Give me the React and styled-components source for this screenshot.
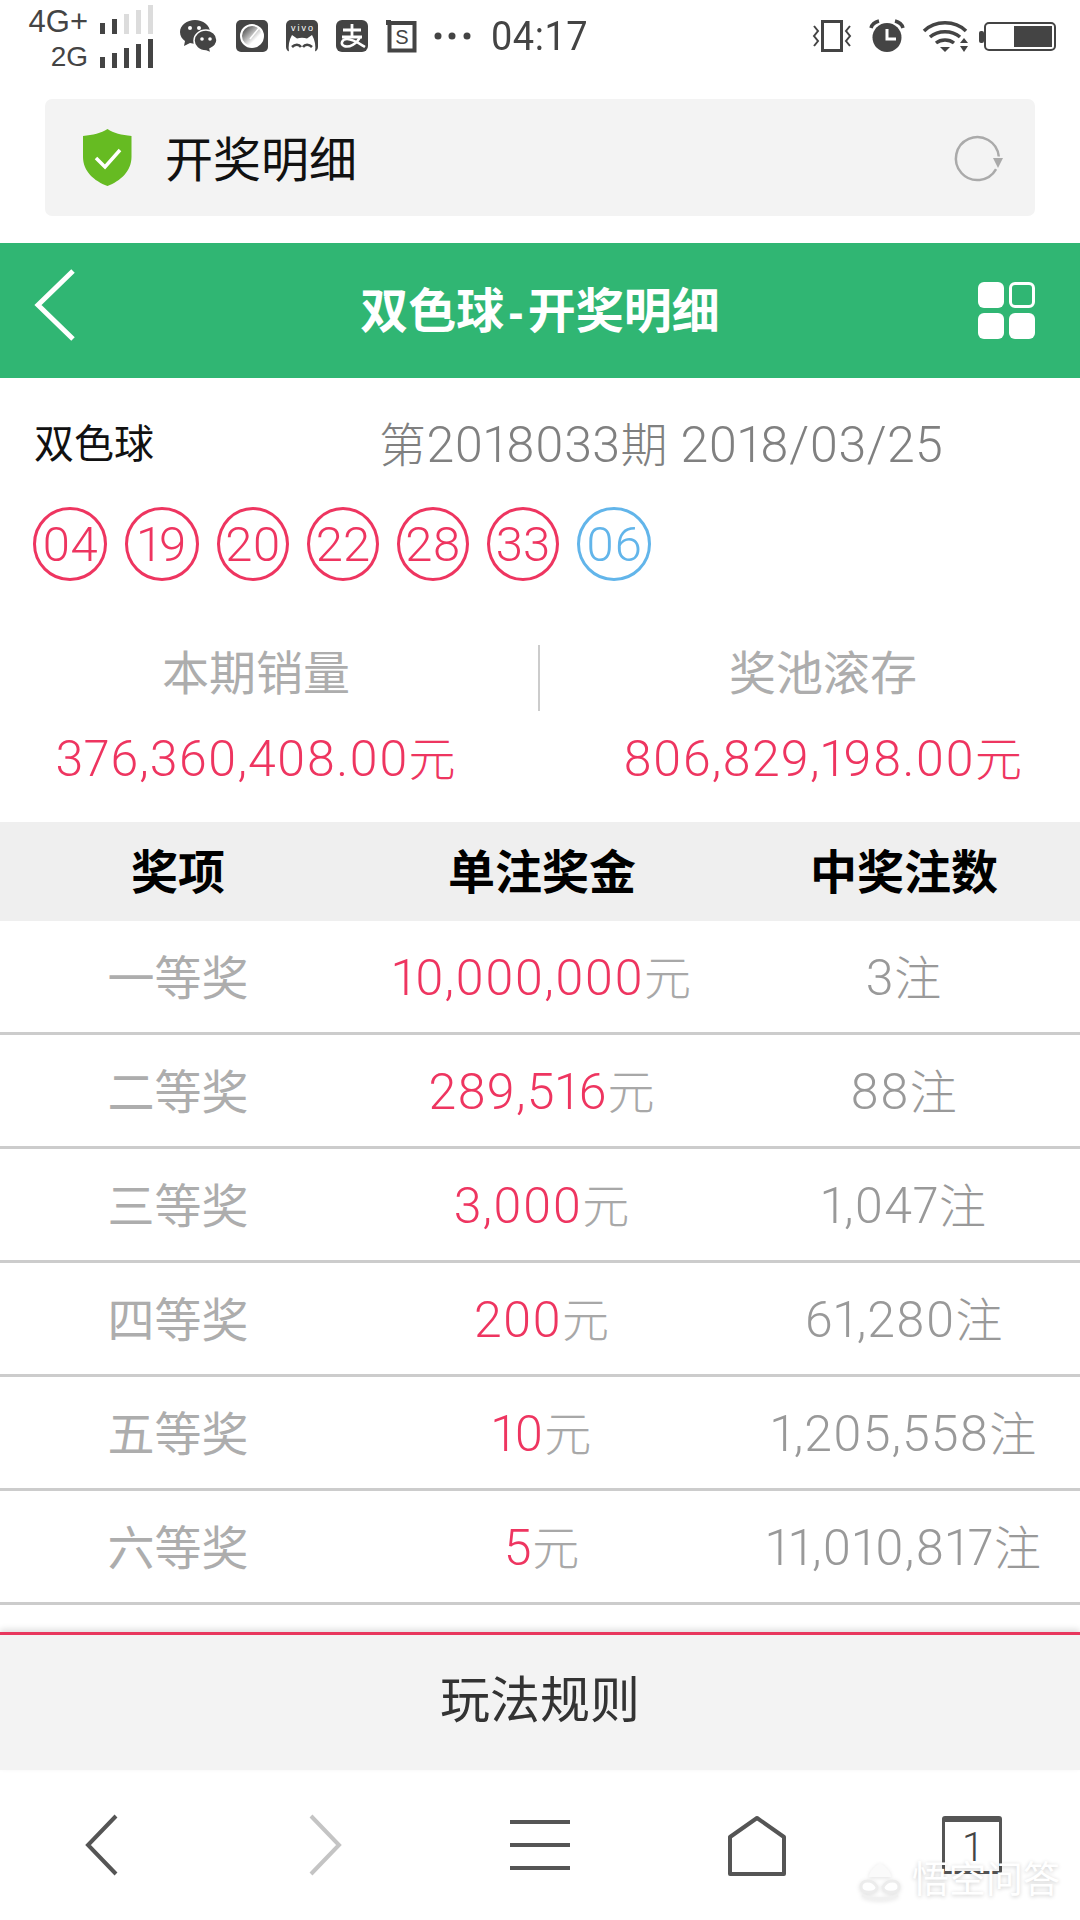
import React from 'react';
import styled, { createGlobalStyle } from 'styled-components';

const FONT = 'Roboto, "Noto Sans CJK SC", sans-serif';
const RED = '#ee3560';
const BLUE = '#62b5ea';
const GREY = '#a8a8a8';
const DARK = '#444444';

const balls = [
  { n: '04', wide: true },
  { n: '19', wide: true },
  { n: '20' },
  { n: '22' },
  { n: '28' },
  { n: '33' },
  { n: '06', blue: true, wide: true },
];

const prizes = [
  { name: '一等奖', money: '10,000,000', count: '3' },
  { name: '二等奖', money: '289,516', count: '88' },
  { name: '三等奖', money: '3,000', count: '1,047' },
  { name: '四等奖', money: '200', count: '61,280' },
  { name: '五等奖', money: '10', count: '1,205,558' },
  { name: '六等奖', money: '5', count: '11,010,817' },
];

const Signal = ({ levels }) => (
  <svg width="52" height="29" viewBox="0 0 52 29">
    {[11, 15, 20, 24, 29].map((h, i) => (
      <rect key={h} x={i * 12} y={29 - h} width="5" height={h} fill={i < levels ? DARK : '#dcdcdc'} />
    ))}
  </svg>
);

const App = () => (
  <Page>
    <GlobalStyle />
    <StatusBar>
      <SignalBlock>
        <SignalRow><SignalText $size={31} $line={25}>4G+</SignalText><Signal levels={2} /></SignalRow>
        <SignalRow><SignalText $size={28} $line={22}>2G</SignalText><Signal levels={5} /></SignalRow>
      </SignalBlock>
      <NotifyIcons>
        <svg width="38" height="33" viewBox="0 0 38 33">
          <path d="M15 0C7 0 0 5 0 12c0 4 2 7 5 9l-1 5 6-3c2 .5 4 .7 6 .6C24 23 30 18 30 12 30 5 23 0 15 0z" fill={DARK} />
          <path d="M26 10c-7 0-12 5-12 10.500S19 31 26 31l5 2-1-4c4-2 7-5 7-9 0-5.500-5-10-11-10z" fill={DARK} stroke="#fff" strokeWidth="1.500" />
          <circle cx="10" cy="8" r="2" fill="#fff" /><circle cx="19" cy="8" r="2" fill="#fff" />
          <circle cx="22" cy="19" r="1.800" fill="#fff" /><circle cx="30" cy="19" r="1.800" fill="#fff" />
        </svg>
        <svg width="32" height="32" viewBox="0 0 32 32">
          <defs>
            <linearGradient id="dial" x1="0.100" y1="0.100" x2="0.800" y2="0.800">
              <stop offset="0" stopColor="#444" /><stop offset="0.800" stopColor="#fff" />
            </linearGradient>
          </defs>
          <rect width="32" height="32" rx="5" fill={DARK} />
          <circle cx="16" cy="16" r="11" fill="url(#dial)" stroke="#fff" strokeWidth="2" />
          <path d="M14 19L23 8" stroke="#fff" strokeWidth="1.500" />
        </svg>
        <svg width="32" height="32" viewBox="0 0 32 32">
          <rect width="32" height="32" rx="5" fill={DARK} />
          <text x="16" y="11" fontSize="9" textLength="22" fill="#fff" textAnchor="middle" fontFamily="Liberation Sans, sans-serif">vivo</text>
          <path d="M6 15l5 3.500c3-1 7-1 10 0L26 15c3 5 4 11 3 17H3c-1-6 0-12 3-17z" fill="#fff" />
          <path d="M6 27c3-3 7-3 9 0M17 27c2-3 6-3 9 0" stroke={DARK} strokeWidth="2.500" fill="none" />
        </svg>
        <svg width="32" height="32" viewBox="0 0 32 32">
          <rect width="32" height="32" rx="6" fill={DARK} />
          <path d="M16 4v12M7 10h18M6 17h20" stroke="#fff" strokeWidth="2.800" fill="none" />
          <path d="M24 17c-3 7-11 11-16 9-4-2-2-7 3-7 6 0 13 5 18 8" stroke="#fff" strokeWidth="2.500" fill="none" />
        </svg>
        <svg width="30" height="32" viewBox="0 0 30 32">
          <path d="M3 3h25.500v27.500H3.500V3" stroke={DARK} strokeWidth="4" fill="none" />
          <rect y="0" width="5" height="5" fill={DARK} />
          <text x="16" y="24" fontSize="20" fill={DARK} textAnchor="middle" fontFamily="Liberation Sans, sans-serif">S</text>
        </svg>
        <svg width="37" height="8" viewBox="0 0 37 8">
          <circle cx="4" cy="4" r="3.500" fill={DARK} /><circle cx="18" cy="4" r="3.500" fill={DARK} /><circle cx="33" cy="4" r="3.500" fill={DARK} />
        </svg>
      </NotifyIcons>
      <Clock>04:17</Clock>
      <SystemIcons>
        <svg width="38" height="32" viewBox="0 0 38 32">
          <rect x="9.500" y="1.500" width="19" height="29" stroke={DARK} strokeWidth="3" fill="none" />
          <path d="M1 6l4 5-4 5 4 5-4 5" stroke={DARK} strokeWidth="2" fill="none" />
          <path d="M37 6l-4 5 4 5-4 5 4 5" stroke={DARK} strokeWidth="2" fill="none" />
        </svg>
        <svg width="34" height="32" viewBox="0 0 34 32">
          <circle cx="17" cy="17.500" r="14.500" fill={DARK} />
          <path d="M1 8c1-4 4-6 8-7M33 8c-1-4-4-6-8-7" stroke={DARK} strokeWidth="3.500" fill="none" />
          <path d="M17 9v10h9" stroke="#fff" strokeWidth="3" fill="none" />
        </svg>
        <svg width="45" height="32" viewBox="0 0 45 32">
          <path d="M1 11C12 0 32 0 43 11" stroke={DARK} strokeWidth="3.500" fill="none" />
          <path d="M7 17c8-7 22-7 30 0" stroke={DARK} strokeWidth="3.500" fill="none" />
          <path d="M13 23c5-4 13-4 18 0" stroke={DARK} strokeWidth="3.500" fill="none" />
          <path d="M17 27h10l-5 5z" fill={DARK} />
          <path d="M41 18l4 5h-8zM37 26h8l-4 6z" fill={DARK} />
        </svg>
        <svg width="77" height="29" viewBox="0 0 77 29">
          <rect x="0" y="9" width="5" height="12" rx="2" fill={DARK} />
          <rect x="6" y="1" width="70" height="27" rx="4" stroke={DARK} strokeWidth="2" fill="#fff" />
          <rect x="35" y="4" width="38" height="21" fill={DARK} />
        </svg>
      </SystemIcons>
    </StatusBar>

    <AddressBar>
      <svg width="49" height="57" viewBox="0 0 49 57">
        <path d="M24.500 0c6 4 14 6 24 7v21c0 14-11 24-24 29C11 52 0 42 0 28V7c10-1 18-3 24.500-7z" fill="#66bb22" />
        <path d="M13 29l9 9 15-17" stroke="#fff" strokeWidth="3.500" fill="none" />
      </svg>
      <AddressText>开奖明细</AddressText>
      <Reload>
        <svg width="50" height="48" viewBox="0 0 50 48">
          <path d="M44 31A21.500 21.500 0 1 1 44 18" stroke="#aaa" strokeWidth="2.500" fill="none" transform="rotate(12 23 24)" />
          <path d="M39 24h10l-5 10z" fill="#aaa" />
        </svg>
      </Reload>
    </AddressBar>

    <Header>
      <BackArrow width="44" height="74" viewBox="0 0 44 74">
        <path d="M40 3L5 37l35 34" stroke="#fff" strokeWidth="5" fill="none" />
      </BackArrow>
      <HeaderTitle>双色球<Dash>-</Dash>开奖明细</HeaderTitle>
      <GridIcon>
        <GridCell />
        <GridCell $outline />
        <GridCell />
        <GridCell />
      </GridIcon>
    </Header>

    <InfoRow>
      <LotteryName>双色球</LotteryName>
      <Issue>
        <Cjk>第</Cjk>2018033<Cjk>期</Cjk> 2018/03/25
      </Issue>
    </InfoRow>

    <BallRow>
      {balls.map((b) => (
        <Ball key={b.n} $blue={b.blue} $wide={b.wide}>{b.n}</Ball>
      ))}
    </BallRow>

    <Stats>
      <StatLabel>本期销量</StatLabel>
      <StatDivider />
      <StatLabel>奖池滚存</StatLabel>
      <StatValue>376,360,408.00<Cjk>元</Cjk></StatValue>
      <span />
      <StatValue>806,829,198.00<Cjk>元</Cjk></StatValue>
    </Stats>

    <TableHead>
      <HeadCell>奖项</HeadCell>
      <HeadCell>单注奖金</HeadCell>
      <HeadCell>中奖注数</HeadCell>
    </TableHead>
    {prizes.map((p) => (
      <PrizeRow key={p.name}>
        <PrizeName>{p.name}</PrizeName>
        <PrizeMoney>{p.money}<GreyCjk>元</GreyCjk></PrizeMoney>
        <PrizeCount>{p.count}<Cjk>注</Cjk></PrizeCount>
      </PrizeRow>
    ))}

    <RulesPanel>玩法规则</RulesPanel>

    <BottomNav>
      <svg width="33" height="60" viewBox="0 0 33 60">
        <path d="M31 1L3 30l28 29" stroke="#555" strokeWidth="4" fill="none" />
      </svg>
      <svg width="33" height="60" viewBox="0 0 33 60">
        <path d="M2 1l28 29L2 59" stroke="#c4c4c4" strokeWidth="4" fill="none" />
      </svg>
      <MenuIcon><MenuBar /><MenuBar /><MenuBar /></MenuIcon>
      <svg width="58" height="61" viewBox="0 0 58 61">
        <path d="M29 3L56 22v37H2V22z" stroke="#555" strokeWidth="4" fill="none" strokeLinejoin="round" />
      </svg>
      <TabsIcon>1</TabsIcon>
    </BottomNav>

    <Watermark>
      <WatermarkLogo width="44" height="38" viewBox="0 0 44 38">
        <path d="M22 1c-7 5-11 9-11 14h22c0-5-4-9-11-14z" fill="#fafafa" />
        <path d="M3 25c0-8 12-8 16 0 0 7-16 7-16 0zM25 25c4-8 16-8 16 0 0 7-16 7-16 0z" fill="#fff" stroke="#ececec" strokeWidth="3" />
        <path d="M4 33c10 5 26 5 36 0" stroke="#f0f0f0" strokeWidth="3" fill="none" />
      </WatermarkLogo>
      <WatermarkText>悟空问答</WatermarkText>
    </Watermark>
  </Page>
);

const GlobalStyle = createGlobalStyle`
  html, body {
    margin: 0;
    padding: 0;
    background: #fff;
  }
  * {
    box-sizing: border-box;
  }
  svg {
    display: block;
    flex: none;
    overflow: visible;
  }
`;

const Page = styled.div`
  position: relative;
  width: 1080px;
  height: 1920px;
  overflow: hidden;
  background: #fff;
  font-family: ${FONT};
  font-weight: 400;
  font-variant-numeric: proportional-nums;
`;

const StatusBar = styled.div`
  display: flex;
  align-items: center;
  height: 72px;
  padding: 0 24px 0 30px;
  color: ${DARK};
`;

const SignalBlock = styled.div`
  display: flex;
  flex-direction: column;
  align-items: flex-end;
  gap: 5px;
  width: 122px;
  margin-top: 1px;
`;

const SignalRow = styled.div`
  display: flex;
  align-items: flex-end;
  gap: 12px;
  height: 29px;
`;

const SignalText = styled.span`
  font-family: "Liberation Sans", sans-serif;
  font-size: ${(p) => p.$size}px;
  line-height: ${(p) => p.$line}px;
`;

const NotifyIcons = styled.div`
  display: flex;
  align-items: center;
  gap: 18px;
  margin-left: 28px;
`;

const Clock = styled.span`
  margin-left: 20px;
  font-family: Roboto, sans-serif;
  font-size: 38px;
  font-variant-numeric: tabular-nums;
  letter-spacing: 0.5px;
  transform: scaleY(1.05);
`;

const SystemIcons = styled.div`
  display: flex;
  align-items: center;
  gap: 19px;
  margin-left: auto;

  svg:last-child {
    margin-left: -8px;
  }
`;

const AddressBar = styled.div`
  display: flex;
  align-items: center;
  height: 117px;
  margin: 27px 45px;
  padding: 0 30px 0 38px;
  background: #f3f3f3;
  border-radius: 7px;
`;

const AddressText = styled.span`
  margin: -4px 0 0 33px;
  font-size: 48px;
  color: #111;
`;

const Reload = styled.div`
  margin-left: auto;
  margin-right: 1px;
`;

const Header = styled.div`
  display: flex;
  align-items: center;
  justify-content: space-between;
  height: 135px;
  padding: 0 45px 0 33px;
  background: #30b673;
`;

const BackArrow = styled.svg`
  margin-bottom: 12px;
`;

const HeaderTitle = styled.h1`
  margin: -7px 0 0 25px;
  font-size: 48px;
  font-weight: 700;
  color: #fff;
`;

const Dash = styled.span`
  padding: 0 4px;
  font-family: "Liberation Sans", sans-serif;
  font-size: 46px;
`;

const GridIcon = styled.div`
  display: grid;
  grid-template-columns: 26px 26px;
  grid-auto-rows: 26px;
  gap: 5px;
`;

const GridCell = styled.div`
  border-radius: 6px;
  background: ${(p) => (p.$outline ? 'transparent' : '#fff')};
  border: ${(p) => (p.$outline ? '3px solid #fff' : 'none')};
`;

const InfoRow = styled.div`
  display: flex;
  align-items: center;
  height: 129px;
  padding: 0 34px 3px;
`;

const LotteryName = styled.span`
  font-size: 40px;
  color: #111;
`;

const Issue = styled.span`
  margin-left: 225px;
  font-size: 50px;
  font-weight: 300;
  letter-spacing: 0.4px;
  color: #808080;
  white-space: pre;
`;

const Cjk = styled.span`
  font-size: 47px;
`;

const GreyCjk = styled(Cjk)`
  color: ${GREY};
`;

const BallRow = styled.div`
  display: flex;
  gap: 18px;
  padding-left: 33px;
`;

const Ball = styled.div`
  display: flex;
  align-items: center;
  justify-content: center;
  width: ${(p) => (p.$wide ? 74 : 72)}px;
  height: 74px;
  border: 3px solid ${(p) => (p.$blue ? BLUE : RED)};
  border-radius: 50%;
  font-size: 49px;
  font-weight: 300;
  color: ${(p) => (p.$blue ? BLUE : RED)};
`;

const Stats = styled.div`
  display: grid;
  grid-template-columns: 512px 54px 514px;
  grid-template-rows: 66px 111px;
  margin-top: 64px;
  justify-items: center;
`;

const StatLabel = styled.div`
  margin-top: -4px;
  font-size: 47px;
  line-height: 66px;
  color: #adadad;
`;

const StatDivider = styled.div`
  width: 2px;
  height: 66px;
  background: #cccccc;
`;

const StatValue = styled.div`
  margin-top: 15px;
  font-size: 50px;
  font-weight: 300;
  line-height: 66px;
  letter-spacing: 1px;
  color: ${RED};
`;

const columns = '356px 372px 352px';

const TableHead = styled.div`
  display: grid;
  grid-template-columns: ${columns};
  align-items: center;
  justify-items: center;
  height: 99px;
  padding-bottom: 6px;
  background: #efefef;
`;

const HeadCell = styled.div`
  font-size: 47px;
  font-weight: 700;
  color: #000;
`;

const PrizeRow = styled.div`
  display: grid;
  grid-template-columns: ${columns};
  align-items: center;
  justify-items: center;
  height: 114px;
  padding-bottom: 5px;
  border-bottom: 3px solid #cccccc;
`;

const PrizeName = styled.div`
  font-size: 47px;
  color: #adadad;
`;

const PrizeMoney = styled.div`
  font-size: 50px;
  font-weight: 300;
  letter-spacing: 1px;
  color: ${RED};
`;

const PrizeCount = styled.div`
  font-size: 50px;
  font-weight: 300;
  letter-spacing: 1px;
  color: #999;
`;

const RulesPanel = styled.div`
  display: flex;
  align-items: center;
  justify-content: center;
  height: 138px;
  margin-top: 27px;
  padding-bottom: 14px;
  background: #f3f3f3;
  border-top: 3px solid #e8365d;
  box-shadow: 0 -3px 6px rgba(0, 0, 0, 0.12);
  font-size: 50px;
  color: #333;
`;

const BottomNav = styled.div`
  display: grid;
  grid-template-columns: 202px 246px 184px 250px 180px;
  align-items: center;
  justify-items: center;
  height: 150px;
`;

const MenuIcon = styled.div`
  display: flex;
  flex-direction: column;
  gap: 19px;
  width: 60px;
`;

const MenuBar = styled.div`
  height: 4px;
  background: #555;
`;

const TabsIcon = styled.div`
  display: flex;
  align-items: center;
  justify-content: center;
  width: 60px;
  height: 58px;
  padding-top: 2px;
  border: 3px solid #555;
  border-top-width: 6px;
  border-radius: 3px;
  font-size: 40px;
  font-weight: 300;
  line-height: 30px;
  color: #444;
`;

const Watermark = styled.div`
  position: absolute;
  left: 858px;
  top: 1862px;
  display: flex;
  align-items: center;
  gap: 10px;
`;

const WatermarkLogo = styled.svg`
  filter: drop-shadow(0 1px 2px rgba(0, 0, 0, 0.12));
`;

const WatermarkText = styled.span`
  font-size: 37px;
  line-height: 38px;
  color: #fff;
  text-shadow: 0 1px 4px rgba(0, 0, 0, 0.2);
  white-space: nowrap;
`;

export default App;
